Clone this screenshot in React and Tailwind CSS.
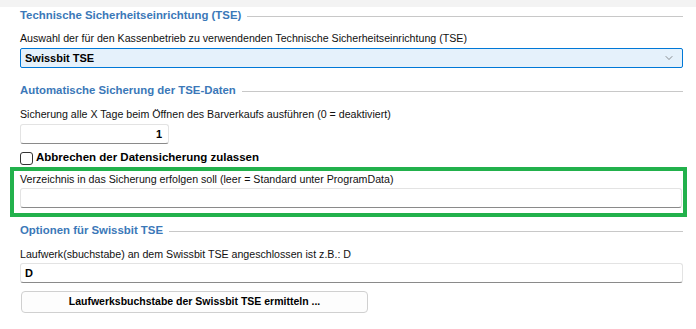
import { ChevronDown } from 'lucide-react'

const font = { fontFamily: '"Liberation Sans", Arial, sans-serif' }

function GroupHeading({ children, className = '' }) {
  return (
    <div className={`flex h-[18px] items-center gap-[6px] ${className}`}>
      <span className="text-[11.4px] font-bold text-[#3b78b8]">{children}</span>
      <div className="h-px flex-1 bg-[#c8c8c8]" />
    </div>
  )
}

function Label({ children, className = '' }) {
  return <div className={`flex h-[16px] items-center text-[10.65px] text-[#111] ${className}`}>{children}</div>
}

function TextBox({ value = '', className = '', align = 'left' }) {
  return (
    <div
      className={`flex h-[20px] items-center rounded-[3px] border border-[#e3e3e3] border-b-[#8a8a8a] bg-white px-[4px] text-[11px] font-bold text-black ${
        align === 'right' ? 'justify-end' : ''
      } ${className}`}
    >
      {value}
    </div>
  )
}

export default function App() {
  return (
    <div className="h-[329px] w-[696px] overflow-hidden bg-white" style={font}>
      <div className="h-[7px] bg-[#f3f3f3]" />
      <div className="pl-[20px] pr-[13px]">
        <GroupHeading>Technische Sicherheitseinrichtung (TSE)</GroupHeading>
        <Label className="mt-[6px]">
          Auswahl der für den Kassenbetrieb zu verwendenden Technische Sicherheitseinrichtung (TSE)
        </Label>
        <div className="mt-[1px] flex h-[20px] items-center justify-between rounded-[2px] border border-[#0078d7] bg-[#e5f1fb] pl-[4px] pr-[7px]">
          <span className="text-[11px] font-bold text-black">Swissbit TSE</span>
          <ChevronDown size={12} strokeWidth={1.3} className="text-[#555]" />
        </div>

        <GroupHeading className="mt-[14px]">Automatische Sicherung der TSE-Daten</GroupHeading>
        <Label className="mt-[7px]">
          Sicherung alle X Tage beim Öffnen des Barverkaufs ausführen (0 = deaktiviert)
        </Label>
        <TextBox value="1" align="right" className="mt-[1px] w-[149px] pr-[6px]" />

        <label className="mt-[6px] flex h-[16px] items-center gap-[3px]">
          <span className="h-[13px] w-[13px] rounded-[3px] border border-[#333] bg-white" />
          <span className="text-[11.5px] font-bold text-black">Abbrechen der Datensicherung zulassen</span>
        </label>

        <div className="-ml-[10px] -mr-[4px] mt-[1px] border-4 border-[#22b14c] pb-[5px] pl-[6px] pr-[0px] pt-[1px]">
          <Label>Verzeichnis in das Sicherung erfolgen soll (leer = Standard unter ProgramData)</Label>
          <TextBox className="mr-[1px]" />
        </div>

        <GroupHeading className="mt-[5px]">Optionen für Swissbit TSE</GroupHeading>
        <Label className="mt-[7px]">Laufwerk(sbuchstabe) an dem Swissbit TSE angeschlossen ist z.B.: D</Label>
        <TextBox value="D" />

        <button className="ml-[1px] mt-[8px] flex h-[22px] w-[347px] items-center justify-center rounded-[4px] border border-[#d0d0d0] bg-[#fdfdfd] text-[10.5px] font-bold text-black">
          Laufwerksbuchstabe der Swissbit TSE ermitteln ...
        </button>
      </div>
    </div>
  )
}
